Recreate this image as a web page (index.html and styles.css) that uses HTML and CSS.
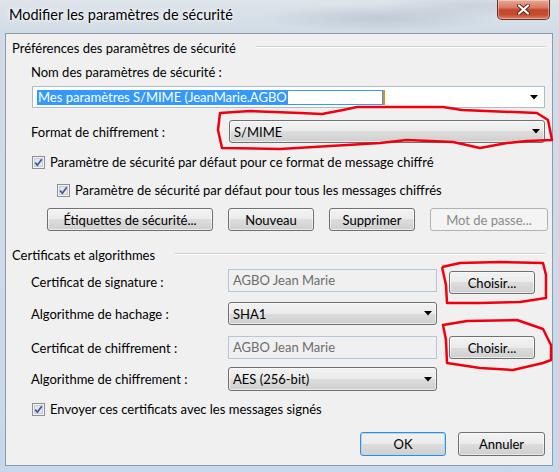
FILE: index.html
```html
<!DOCTYPE html>
<html lang="fr">
<head>
<meta charset="utf-8">
<title>Modifier les paramètres de sécurité</title>
<link rel="stylesheet" href="styles.css">
</head>
<body>
<div class="window">
  <div class="titlebar">
    <div class="title">Modifier les paramètres de sécurité</div>
    <div class="close">
      <svg width="13" height="11" viewBox="0 0 13 11"><path d="M2 1.5 L11 9.5 M11 1.5 L2 9.5" stroke="#5a2418" stroke-width="4" stroke-linecap="round"/><path d="M2 1.5 L11 9.5 M11 1.5 L2 9.5" stroke="#fff" stroke-width="2.2" stroke-linecap="round"/></svg>
    </div>
  </div>
  <div class="client">
    <div class="group-head"><span>Préférences des paramètres de sécurité</span><div class="rule"></div></div>
    <div class="label name-label">Nom des paramètres de sécurité :</div>
    <div class="combo-edit">
      <div class="selection"><span class="sel">Mes paramètres S/MIME (JeanMarie.AGBO</span><span class="sel-tail"></span></div><span class="caret"></span>
      <svg class="arrow" width="8" height="5" viewBox="0 0 8 5"><path d="M0 0 H8 L4 4.5 Z" fill="#000"/></svg>
    </div>
    <div class="format-row">
      <span class="label format-label">Format de chiffrement :</span>
      <div class="dropdown format-dd"><span>S/MIME</span><svg class="arrow" width="8" height="5" viewBox="0 0 8 5"><path d="M0 0 H8 L4 4.5 Z" fill="#000"/></svg></div>
    </div>
    <div class="check c1">
      <svg class="cb" width="13" height="13" viewBox="0 0 13 13"><rect x="0.5" y="0.5" width="12" height="12" fill="#f4f4f4" stroke="#8f8f8f"/><rect x="2.5" y="2.5" width="8" height="8" fill="#e3e8ef" stroke="#c6cdd6"/><path d="M3.2 6.6 L5.4 9.2 L9.8 3.2" fill="none" stroke="#3c56a0" stroke-width="1.7"/></svg>
      <span>Paramètre de sécurité par défaut pour ce format de message chiffré</span>
    </div>
    <div class="check c2">
      <svg class="cb" width="13" height="13" viewBox="0 0 13 13"><rect x="0.5" y="0.5" width="12" height="12" fill="#f4f4f4" stroke="#8f8f8f"/><rect x="2.5" y="2.5" width="8" height="8" fill="#e3e8ef" stroke="#c6cdd6"/><path d="M3.2 6.6 L5.4 9.2 L9.8 3.2" fill="none" stroke="#3c56a0" stroke-width="1.7"/></svg>
      <span>Paramètre de sécurité par défaut pour tous les messages chiffrés</span>
    </div>
    <div class="btn-row">
      <div class="btn w-etiq">Étiquettes de sécurité...</div>
      <div class="btn w86">Nouveau</div>
      <div class="btn w86">Supprimer</div>
      <div class="btn disabled w-mot">Mot de passe...</div>
    </div>
    <div class="group-head head2"><span>Certificats et algorithmes</span><div class="rule"></div></div>
    <div class="frow r1">
      <span class="label">Certificat de signature :</span>
      <div class="field">AGBO Jean Marie</div>
      <div class="btn choose c-low">Choisir...</div>
    </div>
    <div class="frow r2">
      <span class="label">Algorithme de hachage :</span>
      <div class="dropdown"><span>SHA1</span><svg class="arrow" width="8" height="5" viewBox="0 0 8 5"><path d="M0 0 H8 L4 4.5 Z" fill="#000"/></svg></div>
    </div>
    <div class="frow r3">
      <span class="label">Certificat de chiffrement :</span>
      <div class="field">AGBO Jean Marie</div>
      <div class="btn choose">Choisir...</div>
    </div>
    <div class="frow r4">
      <span class="label">Algorithme de chiffrement :</span>
      <div class="dropdown tall"><span>AES (256-bit)</span><svg class="arrow" width="8" height="5" viewBox="0 0 8 5"><path d="M0 0 H8 L4 4.5 Z" fill="#000"/></svg></div>
    </div>
    <div class="check c3">
      <svg class="cb" width="13" height="13" viewBox="0 0 13 13"><rect x="0.5" y="0.5" width="12" height="12" fill="#f4f4f4" stroke="#8f8f8f"/><rect x="2.5" y="2.5" width="8" height="8" fill="#e3e8ef" stroke="#c6cdd6"/><path d="M3.2 6.6 L5.4 9.2 L9.8 3.2" fill="none" stroke="#3c56a0" stroke-width="1.7"/></svg>
      <span>Envoyer ces certificats avec les messages signés</span>
    </div>
    <div class="footer">
      <div class="btn default w86">OK</div>
      <div class="btn w87">Annuler</div>
    </div>
  </div>
  <svg class="annot" width="559" height="472" viewBox="0 0 559 472">
    <path d="M220 113 L250 111 L300 113 L322 114 L343 110 L357 107 L443 107 L462 110 L537 113 L548 120 L552 140 L527 141 L507 143 L480 148 L453 142 L407 140 L380 143 L347 145 L280 149 L222 148 L218 130 Z" fill="none" stroke="#f0000e" stroke-width="2.5" stroke-linejoin="round"/>
    <path d="M442 267 L460 263 L500 262 L543 263 L546 275 L546 298 L520 302 L480 303 L447 303 L446 285 L442 267" fill="none" stroke="#f0000e" stroke-width="2.5" stroke-linejoin="round"/>
    <path d="M443 325 L467 321 L517 320 L543 329 L551 345 L551 360 L543 363 L513 370 L480 368 L447 363 L446 340 Z" fill="none" stroke="#f0000e" stroke-width="2.5" stroke-linejoin="round"/>
  </svg>
</div>
</body>
</html>
```

FILE: styles.css
```css
* { box-sizing: border-box; }
html, body { margin: 0; padding: 0; }
body {
  width: 559px;
  height: 472px;
  overflow: hidden;
  font-family: "Lato", "Segoe UI", sans-serif;
  font-size: 13px;
  color: #000;
  background: linear-gradient(to bottom, #dde4ea 0, #d2dce6 33px, #c6d8ec 100%);
}
.window {
  position: relative;
  width: 559px;
  height: 472px;
  display: flex;
  flex-direction: column;
}
.titlebar {
  height: 33px;
  display: flex;
  justify-content: space-between;
  align-items: flex-start;
  background:
    radial-gradient(ellipse 120px 14px at 380px 18px, rgba(150,160,175,0.35), transparent),
    radial-gradient(ellipse 90px 12px at 470px 6px, rgba(160,170,185,0.3), transparent);
}
.title {
  margin: 6px 0 0 9px;
  font-size: 14.5px;
  line-height: 18px;
  text-shadow: 0 0 6px #fff, 0 0 3px #fff;
}
.close {
  width: 53px;
  height: 20px;
  margin-right: 9px;
  border: 1px solid #6a3226;
  border-top: none;
  border-radius: 0 0 5px 5px;
  background: linear-gradient(#e9a998 0%, #d97a62 40%, #c2472b 52%, #c64d30 78%, #dc8066 100%);
  box-shadow: inset 0 0 0 1px rgba(255,255,255,0.35);
  display: flex;
  align-items: center;
  justify-content: center;
}
.client {
  margin: 0 6px 0 5px;
  height: 433px;
  border: 1px solid #8e9ba8;
  background: #f0f0f0;
  display: flex;
  flex-direction: column;
}
.label { line-height: 16px; white-space: nowrap; }
.group-head {
  margin-top: 5px;
  height: 18px;
  padding-left: 6px;
  display: flex;
  align-items: center;
  white-space: nowrap;
}
.group-head .rule {
  flex: 1;
  align-self: flex-start;
  margin: 7px 7px 0 20px;
  height: 2px;
  border-top: 1px solid #c9cfd4;
  border-bottom: 1px solid #fff;
}
.head2 { margin-top: 15px; }
.name-label { margin-top: 7px; padding-left: 25px; }
.combo-edit {
  margin: 6px 0 0 26px;
  width: 513px;
  height: 22px;
  border: 1px solid #abbccf;
  background: #fff;
  display: flex;
  align-items: center;
  padding-left: 4px;
}
.selection { width: 346px; height: 15px; display: flex; }
.sel {
  background: #3399ff;
  color: #fff;
  line-height: 15px;
  padding-left: 1px;
  white-space: nowrap;
}
.sel-tail {
  flex: 1;
  border: 1px solid #3399ff;
  background: #fff;
}
.caret { width: 2px; height: 15px; background: #e98b1a; }
.arrow { margin-left: auto; margin-right: 6px; flex: none; }
.format-row {
  margin-top: 12px;
  height: 23px;
  display: flex;
  align-items: center;
}
.format-label { width: 223px; padding-left: 25px; }
.dropdown {
  height: 23px;
  border: 1px solid #707070;
  border-radius: 3px;
  background: linear-gradient(#f2f2f2 0%, #ebebeb 50%, #dddddd 50%, #cfcfcf 100%);
  box-shadow: inset 0 0 0 1px rgba(255,255,255,0.55);
  display: flex;
  align-items: center;
  padding-left: 4px;
  white-space: nowrap;
}
.dropdown .arrow { margin-right: 4px; }
.format-dd { width: 316px; }
.dropdown.tall { height: 24px; }
.check {
  height: 16px;
  display: flex;
  align-items: center;
  white-space: nowrap;
}
.check .cb { flex: none; margin-right: 5px; }
.c1 { margin-top: 11px; padding-left: 26px; }
.c2 { margin-top: 12px; padding-left: 51px; }
.c3 { margin-top: 10px; padding-left: 26px; }
.btn-row {
  margin-top: 10px;
  padding-left: 41px;
  display: flex;
  gap: 15px;
}
.btn {
  height: 23px;
  border: 1px solid #707070;
  border-radius: 3px;
  background: linear-gradient(#f2f2f2 0%, #ebebeb 50%, #dddddd 50%, #cfcfcf 100%);
  box-shadow: inset 0 0 0 1px rgba(255,255,255,0.55);
  display: flex;
  align-items: center;
  justify-content: center;
  white-space: nowrap;
  flex: none;
}
.btn.disabled {
  border-color: #adb2b5;
  background: #f4f4f4;
  box-shadow: none;
  color: #8a8a8a;
}
.w-etiq { width: 166px; }
.w86 { width: 86px; }
.w87 { width: 87px; }
.w-mot { width: 118px; }
.frow {
  display: grid;
  grid-template-columns: 185px 209px 86px;
  column-gap: 12px;
  padding-left: 25px;
  align-items: start;
}
.frow .label { margin-top: 5px; }
.r1 { margin-top: 5px; height: 25px; }
.r2 { margin-top: 8px; }
.r3 { margin-top: 11px; }
.r4 { margin-top: 8px; }
.r2 .label, .r3 .label, .r4 .label { margin-top: 4px; }
.field {
  height: 23px;
  border: 1px solid #b5c6da;
  background: #f0f0f0;
  color: #6d6d6d;
  padding-left: 4px;
  line-height: 21px;
  white-space: nowrap;
}
.choose { width: 86px; }
.c-low { margin-top: 2px; }
.footer {
  margin-top: 15px;
  display: flex;
  justify-content: flex-end;
  gap: 12px;
  padding-right: 7px;
}
.footer .btn { height: 24px; }
.btn.default {
  border-color: #3c8ad6;
  box-shadow: inset 0 0 0 1px #a9dcf8;
}
.annot {
  position: absolute;
  left: 0;
  top: 0;
  pointer-events: none;
}
```
